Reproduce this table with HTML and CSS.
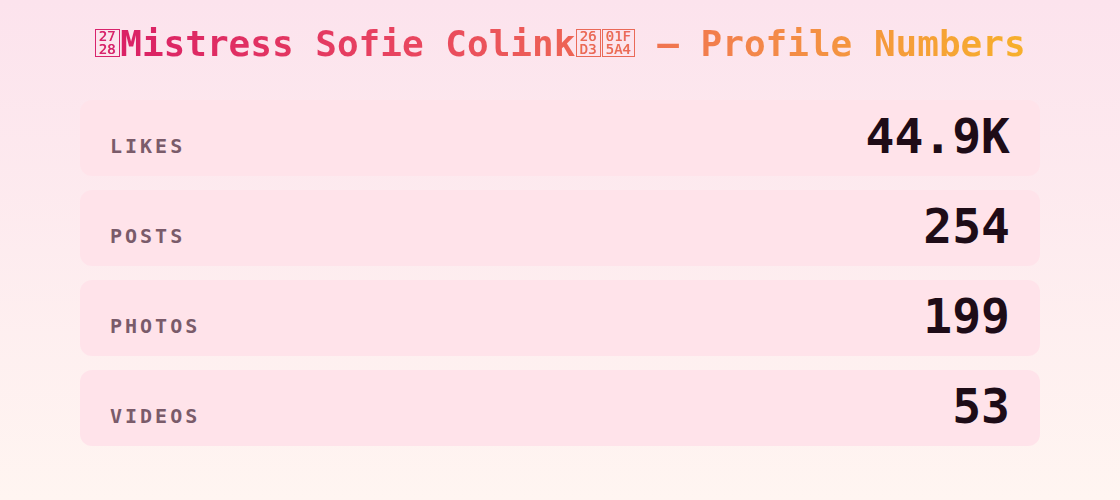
FILE: index.html
```html
<!doctype html>
<html lang="en">
	<head>
		<meta charset="UTF-8" />
		<meta name="viewport" content="width=device-width, initial-scale=1.0" />
		<title>Profile Numbers</title>
		<link rel="stylesheet" href="styles.css">
	</head>
	<body>
		<div class="page">
			<h1 class="title"><span class="tofu tofu-pink"><span>27</span><span>28</span></span>Mistress Sofie Colink<span class="tofu tofu-coral"><span>26</span><span>D3</span></span><span class="tofu tofu-coral"><span>01F</span><span>5A4</span></span> — Profile Numbers</h1>
			<div class="stats">
				<div class="stat">
					<span class="stat-label">Likes</span>
					<span class="stat-value">44.9K</span>
				</div>
				<div class="stat">
					<span class="stat-label">Posts</span>
					<span class="stat-value">254</span>
				</div>
				<div class="stat">
					<span class="stat-label">Photos</span>
					<span class="stat-value">199</span>
				</div>
				<div class="stat">
					<span class="stat-label">Videos</span>
					<span class="stat-value">53</span>
				</div>
			</div>
		</div>
	</body>
</html>
```

FILE: styles.css
```css
html,
body {
	margin: 0;
	height: 100%;
}
body {
	background: linear-gradient(180deg, #fce3ed 0%, #fff5f1 100%);
	font-family: "DejaVu Sans Mono", monospace;
	overflow: hidden;
}
.page {
	width: 960px;
	margin: 0 auto;
	padding-top: 23px;
}
.title {
	margin: 0 0 35px;
	font-size: 36px;
	line-height: 42px;
	font-weight: bold;
	text-align: center;
	white-space: nowrap;
	background: linear-gradient(90deg, #d81b66 0%, #e9465f 35%, #f3864a 70%, #f7b22a 100%);
	-webkit-background-clip: text;
	background-clip: text;
	color: transparent;
}
/* missing-glyph boxes, as the browser drew them */
.tofu {
	display: inline-block;
	vertical-align: 2px;
	margin: 0 0.5px;
	padding: 0 3px;
	border: 1px solid;
	font-size: 14px;
	line-height: 13px;
	font-weight: normal;
}
.tofu span {
	display: block;
}
.tofu-pink {
	color: #d8236c;
	-webkit-text-fill-color: #d8236c;
}
.tofu-coral {
	color: #ea6a58;
	-webkit-text-fill-color: #ea6a58;
}
.stats {
	display: flex;
	flex-direction: column;
	gap: 14px;
}
.stat {
	display: flex;
	justify-content: space-between;
	align-items: baseline;
	padding: 12px 30px 16px;
	background-color: #ffe3ea;
	border-radius: 12px;
}
.stat-label {
	font-size: 20px;
	font-weight: bold;
	letter-spacing: 3px;
	text-transform: uppercase;
	color: #7a5b6a;
}
.stat-value {
	font-size: 48px;
	line-height: 1;
	font-weight: bold;
	color: #1e0c17;
}
```
